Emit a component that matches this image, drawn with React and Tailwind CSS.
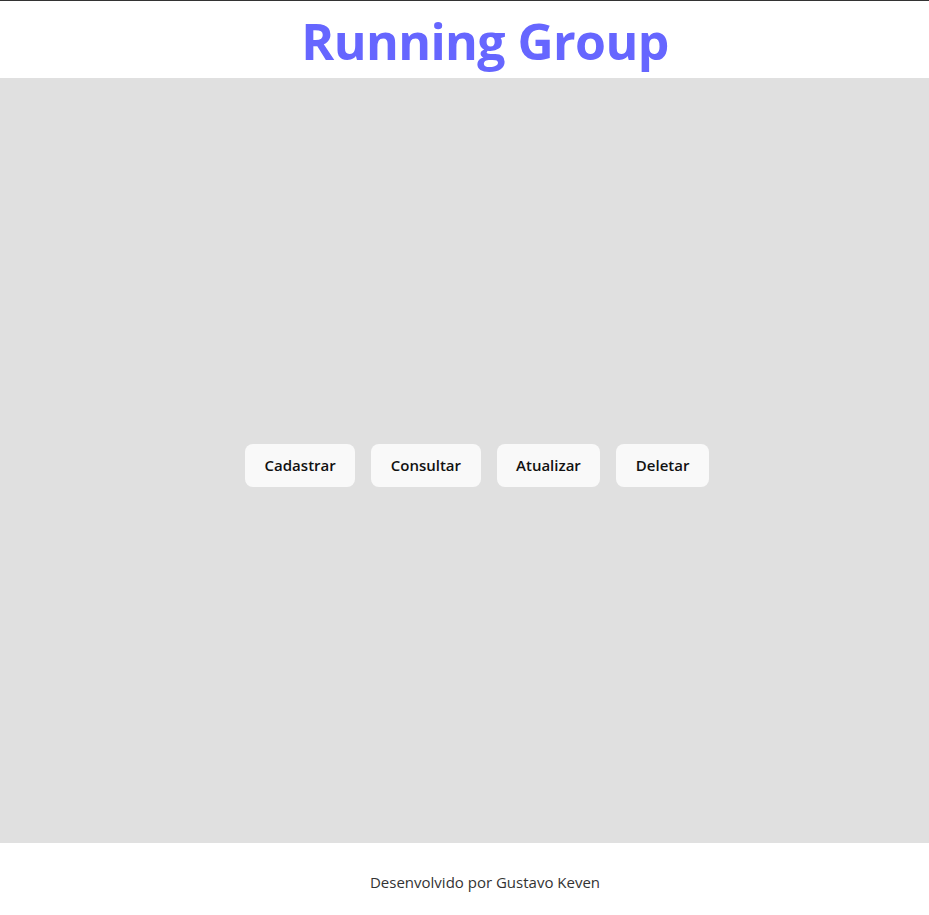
export default function App() {
  const btns = ["Cadastrar", "Consultar", "Atualizar", "Deletar"];
  return (
    <div className="min-h-screen flex flex-col bg-white border-t border-[#333]">
      <header className="h-[77px] flex items-center justify-center pl-[41px]">
        <h1 className="text-[50px] font-bold leading-none text-[#6666ff] tracking-[-0.6px] pt-[3px]" style={{ fontFamily: '"Open Sans", "Noto Sans", sans-serif' }}>
          Running Group
        </h1>
      </header>
      <main className="h-[765px] bg-[#e0e0e0] flex items-center justify-center pl-[41px] pt-[10px]">
        <div className="flex">
          {btns.map((b) => (
            <button
              key={b}
              className="mr-4 h-[43px] px-[19.5px] rounded-lg bg-[#f9f9f9] text-[15px] font-semibold text-[#111]"
              style={{ fontFamily: '"Open Sans", "Noto Sans", sans-serif' }}
            >
              {b}
            </button>
          ))}
        </div>
      </main>
      <footer className="h-[72px] flex items-center justify-center pl-[41px] pt-[6px]">
        <p className="text-[15px] text-[#333]" style={{ fontFamily: '"Open Sans", "Noto Sans", sans-serif' }}>
          Desenvolvido por Gustavo Keven
        </p>
      </footer>
    </div>
  );
}
